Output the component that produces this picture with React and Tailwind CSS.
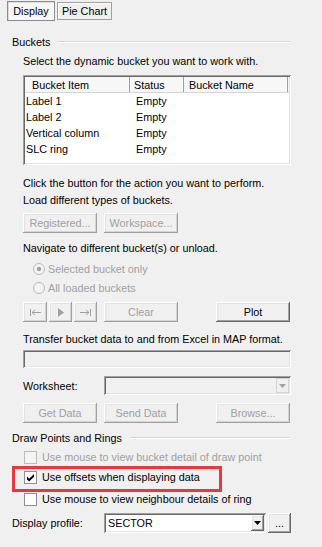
import React from "react";

const BTN_ON =
  "shadow-[inset_-1px_-1px_0_#696969,inset_1px_1px_0_#ffffff,inset_-2px_-2px_0_#a0a0a0,inset_2px_2px_0_#e3e3e3]";
const BTN_OFF =
  "text-[#a0a0a0] shadow-[inset_-1px_-1px_0_#a0a0a0,inset_1px_1px_0_#ffffff,inset_-2px_-2px_0_#d4d4d4,inset_2px_2px_0_#e3e3e3]";
const SUNKEN =
  "shadow-[inset_1px_1px_0_#a0a0a0,inset_-1px_-1px_0_#ffffff,inset_2px_2px_0_#696969,inset_-2px_-2px_0_#e3e3e3]";

function Btn({ children, disabled, className = "" }) {
  return (
    <div
      className={`h-[20px] flex items-center justify-center bg-[#f0f0f0] ${disabled ? BTN_OFF : BTN_ON} ${className}`}
    >
      {children}
    </div>
  );
}

function GroupTitle({ children }) {
  return (
    <div className="flex items-center h-4 pl-[12px] pr-[32px]">
      <span>{children}</span>
      <div className="ml-[8px] flex-1 h-[2px] border-t border-t-[#d5d5d5] border-b border-b-white" />
    </div>
  );
}

function Radio({ checked }) {
  return (
    <svg width="12" height="12" viewBox="0 0 12 12">
      <circle cx="6" cy="6" r="5.5" fill="#f4f4f4" stroke="#b8b8b8" />
      {checked && <circle cx="6" cy="6" r="2.2" fill="#a0a0a0" />}
    </svg>
  );
}

function Check({ checked, disabled }) {
  return (
    <svg width="13" height="13" viewBox="0 0 13 13">
      <rect x="0.5" y="0.5" width="12" height="12" fill={disabled ? "#f4f4f4" : "#ffffff"} stroke={disabled ? "#bcbcbc" : "#8f8f8f"} />
      {checked && <path d="M3 5.6 L5.2 7.8 L10 3 L10 5.8 L5.2 10.6 L3 8.4 Z" fill="#000" />}
    </svg>
  );
}

function Arrow({ color = "#000" }) {
  return (
    <svg width="7" height="4" viewBox="0 0 7 4">
      <path d="M0 0 H7 L3.5 4 Z" fill={color} />
    </svg>
  );
}

const rows = ["Label 1", "Label 2", "Vertical column", "SLC ring"];

export default function App() {
  return (
    <div className="w-[322px] h-[547px] bg-[#f0f0f0] text-[10.8px] leading-4 text-black font-['Liberation_Sans',Arial,sans-serif] relative overflow-hidden">
      {/* tabs */}
      <div className="flex items-start pl-[7px] pt-[1px] gap-[2px]">
        <div className="h-[20px] w-[48px] flex items-center justify-center bg-[#f7f7f7] border border-[#8c8c8c] shadow-[inset_1px_1px_0_#dcdcdc]">
          Display
        </div>
        <div className="mt-[1px] h-[18px] w-[55px] flex items-center justify-center bg-[#f0f0f0] border border-[#a0a0a0] shadow-[inset_1px_1px_0_#ffffff]">
          Pie Chart
        </div>
      </div>

      <div className="mt-[13px]">
        <GroupTitle>Buckets</GroupTitle>
      </div>
      <div className="mt-[3px] h-4 pl-[23px]">Select the dynamic bucket you want to work with.</div>

      {/* bucket list */}
      <div className={`mt-[6px] ml-[23px] w-[268px] h-[90px] bg-white p-[2px] ${SUNKEN}`}>
        <div className="flex h-[16px] bg-[#f7f7f7] border-b border-[#d5d5d5]">
          <div className="w-[105px] pl-[7px] border-r border-[#a0a0a0]">Bucket Item</div>
          <div className="w-[54px] pl-[4px] border-r border-[#a0a0a0]">Status</div>
          <div className="w-[104px] pl-[5px] border-r border-[#a0a0a0]">Bucket Name</div>
          <div className="flex-1" />
        </div>
        {rows.map((r) => (
          <div key={r} className="flex h-[16px] items-center">
            <div className="w-[105px] pl-[1px]">{r}</div>
            <div className="pl-[6px]">Empty</div>
          </div>
        ))}
      </div>

      <div className="mt-[10px] h-4 pl-[23px]">Click the button for the action you want to perform.</div>
      <div className="mt-[1px] h-4 pl-[23px]">Load different types of buckets.</div>
      <div className="mt-[5px] flex gap-[7px] pl-[23px]">
        <Btn disabled className="w-[74px]">Registered...</Btn>
        <Btn disabled className="w-[74px]">Workspace...</Btn>
      </div>

      <div className="mt-[7px] h-4 pl-[23px]">Navigate to different bucket(s) or unload.</div>
      <div className="mt-[5px] h-4 pl-[33px] flex items-center gap-[3px] text-[#a0a0a0]">
        <Radio checked />
        <span>Selected bucket only</span>
      </div>
      <div className="mt-[3px] h-4 pl-[33px] flex items-center gap-[3px] text-[#a0a0a0]">
        <Radio />
        <span>All loaded buckets</span>
      </div>

      <div className="mt-[6px] flex pl-[23px]">
        <Btn disabled className="w-[24px]">
          <svg width="11" height="7" viewBox="0 0 11 7">
            <path d="M0.5 0 V7 M2 3.5 H11 M2 3.5 L5 1 M2 3.5 L5 6" stroke="#a0a0a0" fill="none" />
          </svg>
        </Btn>
        <Btn disabled className="ml-[2px] w-[23px]">
          <svg width="6" height="9" viewBox="0 0 6 9">
            <path d="M0 0 L6 4.5 L0 9 Z" fill="#a0a0a0" />
          </svg>
        </Btn>
        <Btn disabled className="ml-[2px] w-[23px]">
          <svg width="11" height="7" viewBox="0 0 11 7">
            <path d="M10.5 0 V7 M0 3.5 H9 M9 3.5 L6 1 M9 3.5 L6 6" stroke="#a0a0a0" fill="none" />
          </svg>
        </Btn>
        <Btn disabled className="ml-[7px] w-[74px]">Clear</Btn>
        <Btn className="ml-[38px] w-[74px]">Plot</Btn>
      </div>

      <div className="mt-[9px] h-4 pl-[23px]">Transfer bucket data to and from Excel in MAP format.</div>
      <div className={`mt-[3px] ml-[23px] w-[268px] h-[18px] bg-[#f0f0f0] ${SUNKEN}`} />

      <div className="mt-[8px] flex items-center pl-[23px]">
        <span className="w-[81px]">Worksheet:</span>
        <div className={`w-[187px] h-[19px] bg-[#f0f0f0] flex justify-end p-[2px] ${SUNKEN}`}>
          <div className="w-[13px] h-full flex items-center justify-center bg-[#f0f0f0] border border-[#d4d4d4]">
            <Arrow color="#a0a0a0" />
          </div>
        </div>
      </div>

      <div className="mt-[8px] flex gap-[7px] pl-[23px]">
        <Btn disabled className="w-[74px]">Get Data</Btn>
        <Btn disabled className="w-[74px]">Send Data</Btn>
        <Btn disabled className="ml-[31px] w-[74px]">Browse...</Btn>
      </div>

      <div className="mt-[7px]">
        <GroupTitle>Draw Points and Rings</GroupTitle>
      </div>
      <div className="mt-[3px] h-4 pl-[24px] flex items-center gap-[5px] text-[#a0a0a0]">
        <Check disabled />
        <span>Use mouse to view bucket detail of draw point</span>
      </div>
      <div className="mt-[4px] h-4 pl-[24px] flex items-center gap-[5px]">
        <Check checked />
        <span>Use offsets when displaying data</span>
      </div>
      <div className="mt-[6px] h-4 pl-[24px] flex items-center gap-[5px]">
        <Check />
        <span>Use mouse to view neighbour details of ring</span>
      </div>

      <div className="mt-[6px] flex items-center pl-[12px]">
        <span className="w-[92px]">Display profile:</span>
        <div className={`w-[162px] h-[20px] bg-white flex items-center justify-between p-[2px] ${SUNKEN}`}>
          <span className="pl-[2px]">SECTOR</span>
          <div className={`w-[13px] h-full flex items-center justify-center bg-[#f0f0f0] ${BTN_ON}`}>
            <Arrow />
          </div>
        </div>
        <Btn className="ml-[2px] w-[23px]">...</Btn>
      </div>

      {/* annotation */}
      <div className="absolute left-[12px] top-[466px] w-[210px] h-[26px] border-[3px] border-[#e5393e]" />
    </div>
  );
}
